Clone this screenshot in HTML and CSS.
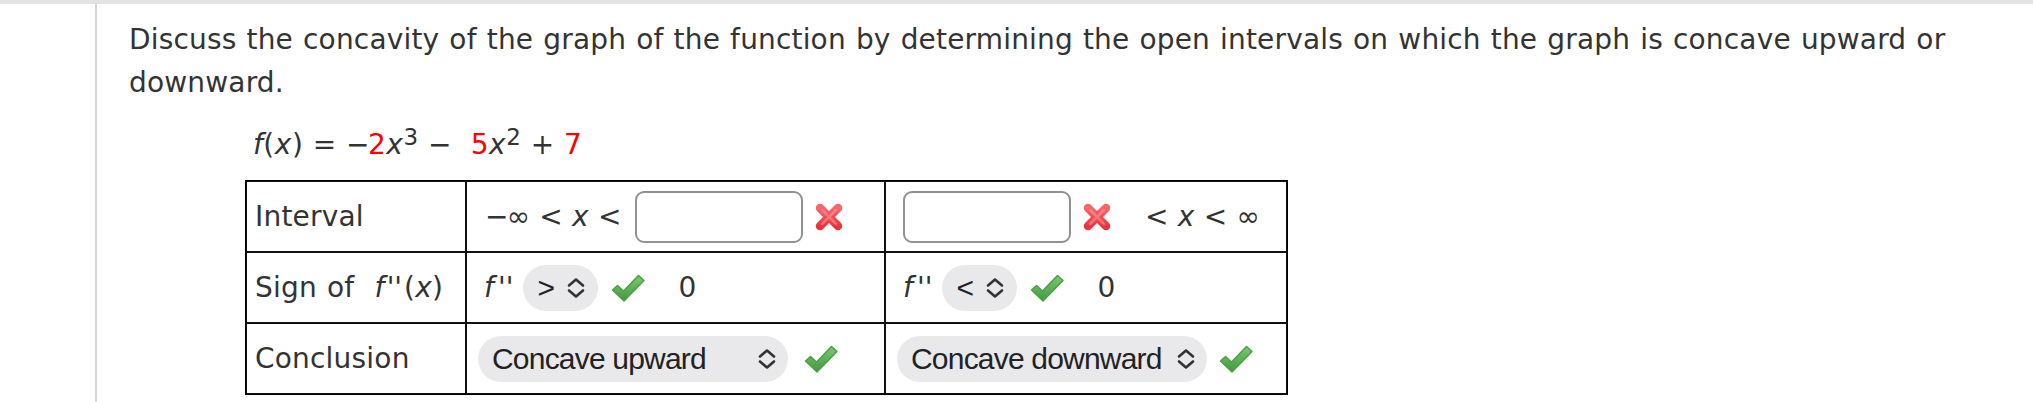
FILE: index.html
```html
<!DOCTYPE html>
<html>
<head>
<meta charset="utf-8">
<link rel="stylesheet" href="styles.css">
</head>
<body>
<div class="topbar"></div>
<div class="main">
  <div class="gutter"></div>
  <div class="content">
    <p class="prompt">Discuss the concavity of the graph of the function by determining the open intervals on which the graph is concave upward or downward.</p>
    <div class="problem">
      <div class="formula"><i>f</i>(<i>x</i>) = <span class="neg">−</span><span class="red">2</span><i>x</i><sup>3</sup> − &nbsp;<span class="red">5</span><i>x</i><sup>2</sup> + <span class="red">7</span></div>
      <table class="grid">
        <tr>
          <td class="c1">Interval</td>
          <td class="c2">
            <div class="cell">
              <span class="math m-lead"><span class="neg">−</span>∞ &lt; <i>x</i> &lt;</span>
              <span class="answer"></span>
              <svg class="xmark" viewBox="0 0 30 30" width="30" height="30"><defs><linearGradient id="xg" x1="0" y1="0" x2="0" y2="1"><stop offset="0" stop-color="#f9666c"/><stop offset="1" stop-color="#e8343f"/></linearGradient></defs><g stroke="url(#xg)" stroke-width="8.5" stroke-linecap="round"><line x1="6" y1="6" x2="24" y2="24"/><line x1="24" y1="6" x2="6" y2="24"/></g><g stroke="#ff9aa0" stroke-width="2.5" stroke-linecap="round" opacity="0.55"><line x1="8" y1="8" x2="22" y2="22"/><line x1="22" y1="8" x2="8" y2="22"/></g></svg>
            </div>
          </td>
          <td class="c3">
            <div class="cell">
              <span class="answer a-lead"></span>
              <svg class="xmark" viewBox="0 0 30 30" width="30" height="30"><g stroke="url(#xg)" stroke-width="8.5" stroke-linecap="round"><line x1="6" y1="6" x2="24" y2="24"/><line x1="24" y1="6" x2="6" y2="24"/></g><g stroke="#ff9aa0" stroke-width="2.5" stroke-linecap="round" opacity="0.55"><line x1="8" y1="8" x2="22" y2="22"/><line x1="22" y1="8" x2="8" y2="22"/></g></svg>
              <span class="math m-tail">&lt; <i>x</i> &lt; ∞</span>
            </div>
          </td>
        </tr>
        <tr>
          <td class="c1">Sign of&nbsp; <i>f<span class="pr">''</span></i>(<i>x</i>)</td>
          <td class="c2">
            <div class="cell">
              <span class="math fpp"><i>f<span class="pr2">''</span></i></span>
              <span class="pill small"><span class="ptext">&gt;</span><svg class="chev" viewBox="0 0 20 22" width="20" height="22"><polyline points="3,8.5 10,2.5 17,8.5" fill="none" stroke="#333" stroke-width="2.6" stroke-linecap="round" stroke-linejoin="round"/><polyline points="3,13.5 10,19.5 17,13.5" fill="none" stroke="#333" stroke-width="2.6" stroke-linecap="round" stroke-linejoin="round"/></svg></span>
              <svg class="check" viewBox="0 0 34 30" width="34" height="30"><defs><linearGradient id="cg" x1="0" y1="0" x2="0" y2="1"><stop offset="0" stop-color="#7bc96f"/><stop offset="1" stop-color="#3f9a3c"/></linearGradient></defs><path d="M1.5 17 L6.5 12.5 L12.5 18 L27.5 2.5 L33 7.5 L13 28 Z" fill="url(#cg)" stroke="#4f9e47" stroke-width="1.5" stroke-linejoin="round"/></svg>
              <span class="math zero">0</span>
            </div>
          </td>
          <td class="c3">
            <div class="cell">
              <span class="math fpp f-lead"><i>f<span class="pr2">''</span></i></span>
              <span class="pill small"><span class="ptext">&lt;</span><svg class="chev" viewBox="0 0 20 22" width="20" height="22"><polyline points="3,8.5 10,2.5 17,8.5" fill="none" stroke="#333" stroke-width="2.6" stroke-linecap="round" stroke-linejoin="round"/><polyline points="3,13.5 10,19.5 17,13.5" fill="none" stroke="#333" stroke-width="2.6" stroke-linecap="round" stroke-linejoin="round"/></svg></span>
              <svg class="check" viewBox="0 0 34 30" width="34" height="30"><path d="M1.5 17 L6.5 12.5 L12.5 18 L27.5 2.5 L33 7.5 L13 28 Z" fill="url(#cg)" stroke="#4f9e47" stroke-width="1.5" stroke-linejoin="round"/></svg>
              <span class="math zero">0</span>
            </div>
          </td>
        </tr>
        <tr>
          <td class="c1">Conclusion</td>
          <td class="c2">
            <div class="cell">
              <span class="pill wide"><span class="ptext">Concave upward</span><svg class="chev" viewBox="0 0 20 22" width="20" height="22"><polyline points="3,8.5 10,2.5 17,8.5" fill="none" stroke="#333" stroke-width="2.6" stroke-linecap="round" stroke-linejoin="round"/><polyline points="3,13.5 10,19.5 17,13.5" fill="none" stroke="#333" stroke-width="2.6" stroke-linecap="round" stroke-linejoin="round"/></svg></span>
              <svg class="check ck-wide" viewBox="0 0 34 30" width="34" height="30"><path d="M1.5 17 L6.5 12.5 L12.5 18 L27.5 2.5 L33 7.5 L13 28 Z" fill="url(#cg)" stroke="#4f9e47" stroke-width="1.5" stroke-linejoin="round"/></svg>
            </div>
          </td>
          <td class="c3">
            <div class="cell">
              <span class="pill wide"><span class="ptext">Concave downward</span><svg class="chev" viewBox="0 0 20 22" width="20" height="22"><polyline points="3,8.5 10,2.5 17,8.5" fill="none" stroke="#333" stroke-width="2.6" stroke-linecap="round" stroke-linejoin="round"/><polyline points="3,13.5 10,19.5 17,13.5" fill="none" stroke="#333" stroke-width="2.6" stroke-linecap="round" stroke-linejoin="round"/></svg></span>
              <svg class="check ck-wide2" viewBox="0 0 34 30" width="34" height="30"><path d="M1.5 17 L6.5 12.5 L12.5 18 L27.5 2.5 L33 7.5 L13 28 Z" fill="url(#cg)" stroke="#4f9e47" stroke-width="1.5" stroke-linejoin="round"/></svg>
            </div>
          </td>
        </tr>
      </table>
    </div>
  </div>
</div>
</body>
</html>
```

FILE: styles.css
```css
html, body {
  margin: 0;
  padding: 0;
  background: #fff;
}
body {
  font-family: "DejaVu Sans", Verdana, sans-serif;
  color: #333;
  font-size: 28px;
}
.topbar {
  height: 4px;
  background: #e4e4e4;
}
.main {
  display: flex;
  min-height: 398px;
}
.gutter {
  flex: none;
  width: 95px;
  border-right: 2px solid #d6d6d6;
}
.content {
  flex: 1;
  padding: 14px 30px 0 32px;
}
.prompt {
  margin: 0;
  font-size: 28px;
  line-height: 43px;
  letter-spacing: 0.17px;
  word-spacing: 1px;
}
.problem {
  margin-left: 116px;
}
.formula {
  margin-top: 19px;
  padding-left: 8px;
  line-height: 43px;
  font-size: 28px;
  letter-spacing: 0.5px;
}
.formula sup {
  font-size: 23px;
  line-height: 0;
  vertical-align: 9px;
}
.neg {
  margin-right: -2px;
}
.red {
  color: #ff0000;
}
.grid {
  margin-top: 14px;
  border-collapse: separate;
  border-spacing: 0;
  border: 1px solid #000;
  table-layout: fixed;
}
.grid td {
  box-sizing: border-box;
  border: 1px solid #111;
  height: 71px;
  padding: 0 11px;
  vertical-align: middle;
  font-size: 28px;
  letter-spacing: 0.2px;
}
.grid td.c1 {
  width: 220px;
  padding-left: 8px;
  white-space: nowrap;
  word-spacing: 1px;
}
.grid td.c2 {
  width: 419px;
}
.grid td.c3 {
  width: 402px;
}
.pr {
  letter-spacing: 0;
  margin-left: 2px;
  margin-right: 2px;
}
.pr2 {
  letter-spacing: 0;
  margin-left: 4px;
}
.cell {
  display: flex;
  align-items: center;
  white-space: nowrap;
}
.math {
  line-height: 1;
}
.m-lead {
  margin-left: 7px;
}
.m-tail {
  margin-left: 33px;
}
.answer {
  display: block;
  box-sizing: border-box;
  width: 168px;
  height: 52px;
  border: 2px solid #919191;
  border-radius: 9px;
  background: #fff;
  margin-left: 13px;
}
.answer.a-lead {
  margin-left: 6px;
}
.xmark {
  flex: none;
  margin-left: 11px;
}
.fpp {
  margin-left: 6px;
}
.pill {
  display: flex;
  align-items: center;
  box-sizing: border-box;
  height: 46px;
  border-radius: 23px;
  background: #e9e9ec;
  font-family: "Liberation Sans", Arial, sans-serif;
  font-size: 30px;
  letter-spacing: 0;
  color: #222;
}
.pill.small {
  width: 75px;
  padding: 0 12px 0 14px;
  margin-left: 10px;
  justify-content: space-between;
}
.pill.wide {
  width: 310px;
  padding: 0 11px 0 14px;
}
.pill.wide .ptext {
  letter-spacing: -0.8px;
}
.pill.wide .chev {
  margin-left: auto;
}
.chev {
  flex: none;
}
.check {
  flex: none;
  margin-left: 13px;
}
.ck-wide {
  margin-left: 16px;
}
.ck-wide2 {
  margin-left: 12px;
}
.zero {
  margin-left: 33px;
}
```
